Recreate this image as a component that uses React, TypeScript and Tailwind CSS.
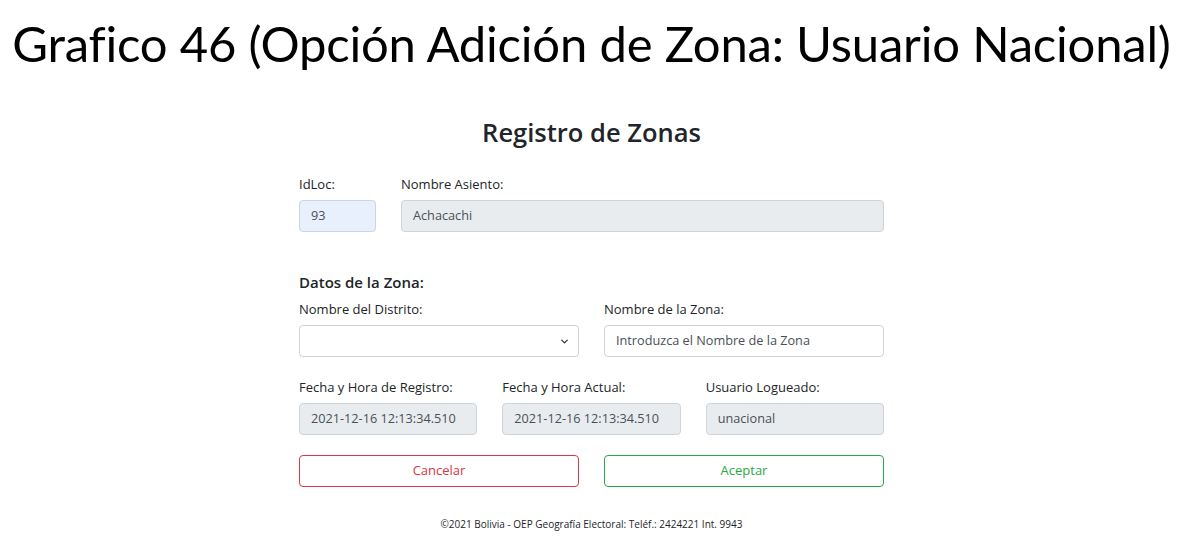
import { ChevronDown } from "lucide-react";

const inputBase =
  "h-[32px] w-full rounded-[4px] border border-[#ced4da] px-[11px] flex items-center text-[12.7px] text-[#495057]";

const Label = ({ children }: { children: string }) => (
  <div className="text-[13px] text-[#212529] mb-[8px] leading-[16px]">{children}</div>
);

export default function App() {
  return (
    <div className="w-[1183px] h-[555px] bg-white overflow-hidden" style={{ fontFamily: '"Open Sans", sans-serif' }}>
      <h1
        className="text-center text-[49px] leading-[58px] pt-[14px] text-black tracking-[-0.2px] whitespace-nowrap"
        style={{ fontFamily: "Lato, sans-serif" }}
      >
        Grafico 46 (Opción Adición de Zona: Usuario Nacional)
      </h1>

      <div className="w-[585px] mx-auto mt-[45px]">
        <h2 className="text-center text-[25.5px] leading-[30px] font-semibold text-[#212529]">Registro de Zonas</h2>

        <div className="flex gap-[25px] mt-[29px]">
          <div className="w-[77px]">
            <Label>IdLoc:</Label>
            <div className={`${inputBase} bg-[#e8f0fe] text-[#212529]`}>93</div>
          </div>
          <div className="flex-1">
            <Label>Nombre Asiento:</Label>
            <div className={`${inputBase} bg-[#e9ecef]`}>Achacachi</div>
          </div>
        </div>

        <div className="mt-[40px] text-[15px] font-semibold text-[#212529] leading-[20px]">Datos de la Zona:</div>

        <div className="grid grid-cols-2 gap-[25px] mt-[9px]">
          <div>
            <Label>Nombre del Distrito:</Label>
            <div className={`${inputBase} bg-white justify-between pr-[8px]`}>
              <span />
              <ChevronDown size={11} strokeWidth={3} className="text-[#343a40]" />
            </div>
          </div>
          <div>
            <Label>Nombre de la Zona:</Label>
            <div className={`${inputBase} bg-white text-[#6c757d]`}>Introduzca el Nombre de la Zona</div>
          </div>
        </div>

        <div className="grid grid-cols-3 gap-[25px] mt-[22px]">
          <div>
            <Label>Fecha y Hora de Registro:</Label>
            <div className={`${inputBase} bg-[#e9ecef]`}>2021-12-16 12:13:34.510</div>
          </div>
          <div>
            <Label>Fecha y Hora Actual:</Label>
            <div className={`${inputBase} bg-[#e9ecef]`}>2021-12-16 12:13:34.510</div>
          </div>
          <div>
            <Label>Usuario Logueado:</Label>
            <div className={`${inputBase} bg-[#e9ecef]`}>unacional</div>
          </div>
        </div>

        <div className="grid grid-cols-2 gap-[25px] mt-[20px]">
          <button className="h-[32px] rounded-[4px] border border-[#dc3545] text-[#dc3545] text-[13px] bg-white">
            Cancelar
          </button>
          <button className="h-[32px] rounded-[4px] border border-[#28a745] text-[#28a745] text-[13px] bg-white">
            Aceptar
          </button>
        </div>

        <div className="text-center text-[10px] text-[#212529] mt-[30px]">
          ©2021 Bolivia - OEP Geografía Electoral: Teléf.: 2424221 Int. 9943
        </div>
      </div>
    </div>
  );
}
